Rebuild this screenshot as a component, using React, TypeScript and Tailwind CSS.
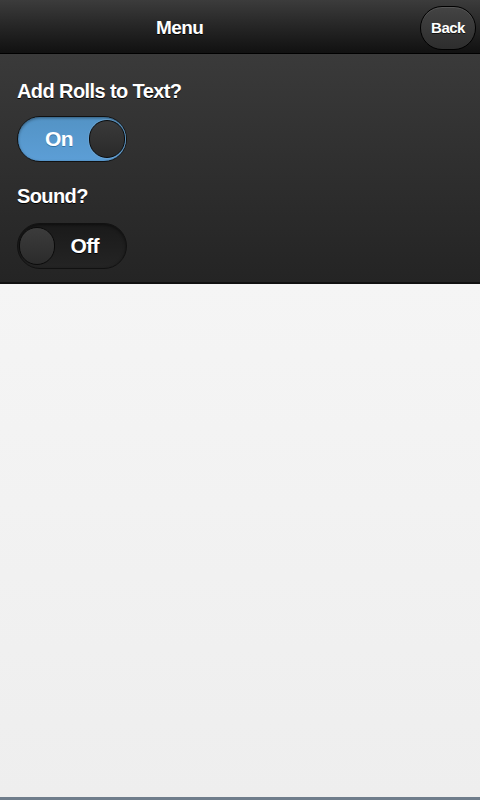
import { useState } from 'react';

const font = { fontFamily: '"Liberation Sans", Arial, sans-serif' };

function Toggle({ on, onChange }: { on: boolean; onChange: () => void }) {
  return (
    <button
      type="button"
      onClick={onChange}
      className={
        on
          ? 'flex h-[46px] w-[110px] items-center justify-between rounded-full border border-[#111] bg-gradient-to-b from-[#5393c5] to-[#5c9ed6] pl-[27px] pr-[1px] shadow-[inset_0_1px_3px_rgba(0,0,0,0.4)]'
          : 'flex h-[46px] w-[110px] items-center justify-between rounded-full border border-[#111] bg-gradient-to-b from-[#1a1a1a] to-[#242424] pl-[1px] pr-[27px] shadow-[inset_0_1px_3px_rgba(0,0,0,0.5)]'
      }>
      {on ? (
        <>
          <span className="text-[21px] font-bold tracking-[-0.6px] text-white [text-shadow:0_1px_0_#3373a5]">On</span>
          <span className="h-[38px] w-[36px] rounded-full border border-[#0b0b0b] bg-gradient-to-b from-[#3a3a3a] to-[#2a2a2a] shadow-[0_0_0_1px_rgba(120,170,210,0.5)]" />
        </>
      ) : (
        <>
          <span className="h-[38px] w-[36px] rounded-full border border-[#0b0b0b] bg-gradient-to-b from-[#3c3c3c] to-[#2b2b2b]" />
          <span className="text-[21px] font-bold tracking-[-0.6px] text-white [text-shadow:0_1px_0_#000]">Off</span>
        </>
      )}
    </button>
  );
}

export default function App() {
  const [rolls, setRolls] = useState(true);
  const [sound, setSound] = useState(false);

  return (
    <div className="flex h-[800px] w-[480px] flex-col bg-[#f2f2f2]" style={font}>
      <header className="flex h-[54px] items-center border-b border-[#000] bg-gradient-to-b from-[#3c3c3c] to-[#111] pt-[3px]">
        <h1 className="ml-[156px] text-[19px] font-bold tracking-[-0.6px] text-white [text-shadow:0_1px_0_#000]">
          Menu
        </h1>
        <button
          type="button"
          className="ml-auto mr-[4px] flex h-[44px] w-[56px] items-center justify-center rounded-[22px] border border-[#000] bg-gradient-to-b from-[#444] to-[#2d2d2d] text-[15px] font-bold tracking-[-0.5px] text-white shadow-[inset_0_1px_0_rgba(255,255,255,0.1)] [text-shadow:0_1px_0_#111]">
          Back
        </button>
      </header>

      <section className="flex flex-col border-b-2 border-[#111] bg-gradient-to-b from-[#3a3a3a] to-[#242424] px-[17px] pb-[13px] pt-[22px]">
        <label className="text-[20px] font-bold tracking-[-0.6px] text-white [text-shadow:0_1px_0_#000]">
          Add Rolls to Text?
        </label>
        <div className="mt-[10px]">
          <Toggle on={rolls} onChange={() => setRolls(!rolls)} />
        </div>
        <label className="mt-[19px] text-[20px] font-bold tracking-[-0.6px] text-white [text-shadow:0_1px_0_#000]">
          Sound?
        </label>
        <div className="mt-[12px]">
          <Toggle on={sound} onChange={() => setSound(!sound)} />
        </div>
      </section>

      <main className="flex-1 bg-gradient-to-b from-[#f5f5f5] to-[#eeeeee]" />
      <div className="h-[3px] bg-[#6f7d8b]" />
    </div>
  );
}
